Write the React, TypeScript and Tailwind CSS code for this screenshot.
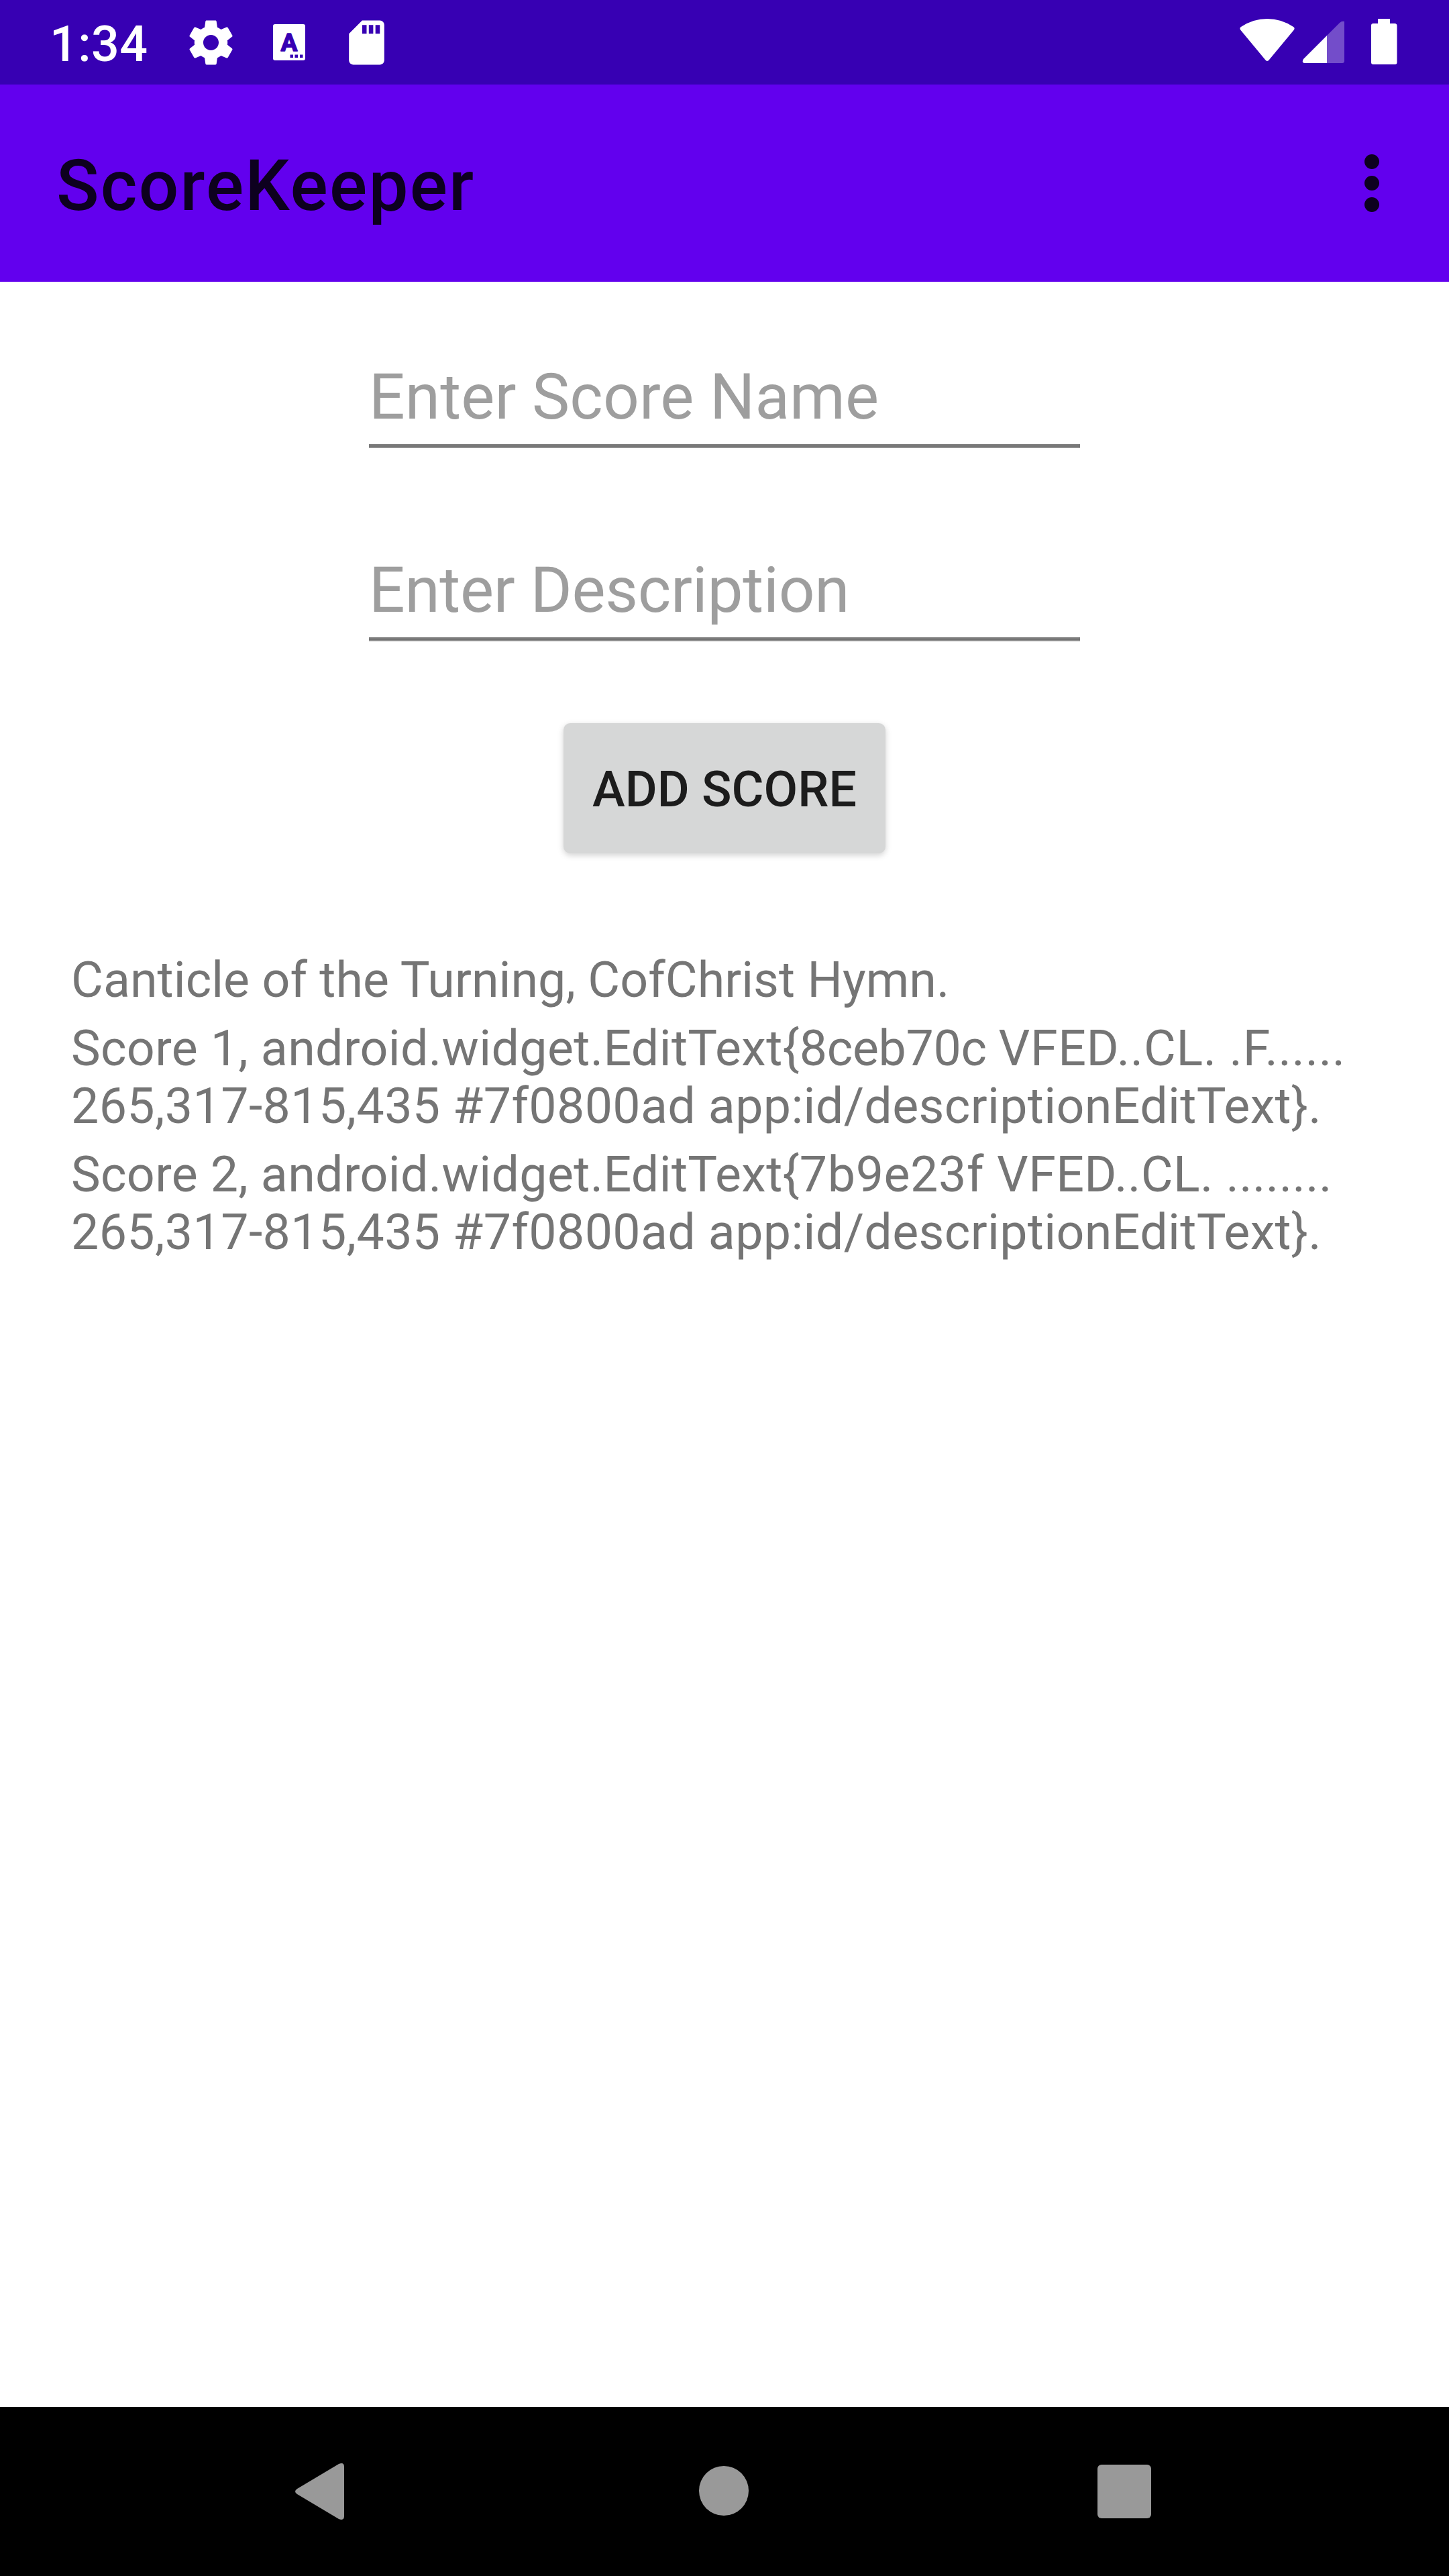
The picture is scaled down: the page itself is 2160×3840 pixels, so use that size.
import React from "react";

type Run = { text: string; tracking: string };

const entries: Run[][][] = [
  [[{ text: "Canticle of the Turning, CofChrist Hymn.", tracking: "tracking-[0.06px]" }]],
  [
    [
      { text: "Score 1, android.widget.EditText{", tracking: "tracking-[0.37px]" },
      { text: "8ceb70c ", tracking: "tracking-[-0.35px]" },
      { text: "VFED..CL. .F......", tracking: "tracking-[0.66px]" },
    ],
    [{ text: "265,317-815,435 #7f0800ad app:id/descriptionEditText}.", tracking: "tracking-[0.37px]" }],
  ],
  [
    [
      { text: "Score 2, android.widget.EditText{", tracking: "tracking-[0.37px]" },
      { text: "7b9e23f ", tracking: "tracking-[0.6px]" },
      { text: "VFED..CL. ........", tracking: "tracking-[0.4px]" },
    ],
    [{ text: "265,317-815,435 #7f0800ad app:id/descriptionEditText}.", tracking: "tracking-[0.37px]" }],
  ],
];

function StatusBar() {
  return (
    <div className="flex h-[126px] items-start justify-between bg-[#3700b3] text-white">
      <div className="flex items-start pl-[74px]">
        <span className="w-[201px] pt-[23px] text-[73.5px] font-medium leading-[86px] tracking-[0.4px]">1:34</span>
        <div className="flex gap-[37px] pt-[24px]">
          <svg className="size-[79px]" viewBox="0 0 24 24" fill="currentColor">
            <path d="M19.43 12.98c.04-.32.07-.64.07-.98s-.03-.66-.07-.98l2.11-1.65c.19-.15.24-.42.12-.64l-2-3.46c-.12-.22-.39-.3-.61-.22l-2.49 1c-.52-.4-1.08-.73-1.69-.98l-.38-2.65C14.46 2.18 14.25 2 14 2h-4c-.25 0-.46.18-.49.42l-.38 2.65c-.61.25-1.17.59-1.69.98l-2.49-1c-.23-.09-.49 0-.61.22l-2 3.46c-.13.22-.07.49.12.64l2.11 1.65c-.04.32-.07.65-.07.98s.03.66.07.98l-2.11 1.65c-.19.15-.24.42-.12.64l2 3.46c.12.22.39.3.61.22l2.49-1c.52.4 1.08.73 1.69.98l.38 2.65c.03.24.24.42.49.42h4c.25 0 .46-.18.49-.42l.38-2.65c.61-.25 1.17-.59 1.69-.98l2.49 1c.23.09.49 0 .61-.22l2-3.46c.12-.22.07-.49-.12-.64l-2.11-1.65zM12 15.5c-1.93 0-3.5-1.57-3.5-3.5s1.57-3.5 3.5-3.5 3.5 1.57 3.5 3.5-1.57 3.5-3.5 3.5z" />
          </svg>
          <div className="flex size-[79px] items-start justify-center pt-[12px]">
            <svg className="h-[54px] w-[48px]" viewBox="0 0 48 54">
              <rect width="48" height="54" rx="3" fill="white" />
              <text
                x="24"
                y="39.500"
                textAnchor="middle"
                className="fill-[#3700b3] stroke-[#3700b3] text-[37px] font-bold"
                strokeWidth="1.500"
                strokeLinejoin="round"
              >
                A
              </text>
              <path d="M25.500 45.500h4.500v4.500h-4.500zM32.500 45.500h4.500v4.500h-4.500zM40 45.500h4.500v4.500h-4.500z" fill="#3700b3" />
            </svg>
          </div>
          <svg className="size-[79px]" viewBox="0 0 24 24" fill="currentColor">
            <path d="M18 2h-8L4.020 8 4 20c0 1.100.9 2 2 2h12c1.100 0 2-.9 2-2V4c0-1.100-.9-2-2-2zm-6 6h-2V4h2v4zm3 0h-2V4h2v4zm3 0h-2V4h2v4z" />
          </svg>
        </div>
      </div>
      <svg className="h-[126px] w-[330px]" viewBox="1830 0 330 126" fill="white">
        <path d="M1849.500 45Q1847 42 1850 40Q1868 28 1889 28Q1910 28 1928 40Q1931 42 1928.500 45L1892 89Q1889 93 1886 89Z" />
        <path d="M1978 53V94H1944Q1940 93 1943 88Z" />
        <path d="M1978 53L1997 34Q2000 31 2004 32V91Q2004 94 2001 94H1978Z" fillOpacity="0.3" />
        <path d="M2054 28h18v7h7q3.500 0 3.500 3.500V93q0 3-3 3H2047q-3 0-3-3V38q0-3 3-3h7z" />
      </svg>
    </div>
  );
}

function AppBar() {
  return (
    <header className="flex h-[294px] items-center justify-between bg-[#6200ee] pl-[84px] pr-[104px] text-black/87">
      <h1 className="pt-[9px] text-[105px] font-medium leading-[124px] tracking-[2.2px]">ScoreKeeper</h1>
      <div className="flex flex-col gap-[10px]">
        <span className="size-[22px] rounded-full bg-black/87" />
        <span className="size-[22px] rounded-full bg-black/87" />
        <span className="size-[22px] rounded-full bg-black/87" />
      </div>
    </header>
  );
}

function Field({ hint, tracking }: { hint: string; tracking: string }) {
  return (
    <div className="flex h-[288px] w-[1060px] flex-col">
      <span className={`text-[94.5px] leading-[112px] text-[#9e9e9e] ${tracking}`}>{hint}</span>
      <div className="mt-[14px] h-[6px] border-y-2 border-t-[#7f7f7f] border-b-[#909090] bg-[#757575]" />
    </div>
  );
}

function NavBar() {
  return (
    <nav className="flex h-[252px] items-center bg-black pl-[440px] text-[#999999]">
      <svg className="h-[84px] w-[73px]" viewBox="0 0 73 84" fill="currentColor">
        <path d="M3 38L65 1Q73 -2 73 5V79Q73 86 65 83L3 46Q-3 42 3 38Z" />
      </svg>
      <div className="ml-[529px] mt-[-2px] size-[74px] rounded-full bg-[#999999]" />
      <div className="ml-[520px] size-[80px] rounded-[6px] bg-[#999999]" />
    </nav>
  );
}

export default function App() {
  return (
    <div className="flex h-[3840px] w-[2160px] flex-col bg-white font-['Roboto',sans-serif]">
      <StatusBar />
      <AppBar />
      <main className="flex flex-1 flex-col items-center pt-[116px]">
        <Field hint="Enter Score Name" tracking="tracking-[0.12px]" />
        <Field hint="Enter Description" tracking="tracking-[-0.27px]" />
        <button className="mt-[-34px] h-[194px] w-[480px] rounded-[10px] bg-[#d6d7d7] pt-[3px] text-[73.5px] font-medium leading-[86px] text-[#1c1c1c] shadow-[0_3px_10px_rgba(0,0,0,0.18)]">
          ADD SCORE
        </button>
        <div className="mt-[146px] flex w-full flex-col gap-[16px] pl-[106px] text-[73.5px] leading-[86px] text-[#757575]">
          {entries.map((lines, i) => (
            <div key={i}>
              {lines.map((runs, j) => (
                <p key={j} className="whitespace-pre">
                  {runs.map((run) => (
                    <span key={run.text} className={run.tracking}>{run.text}</span>
                  ))}
                </p>
              ))}
            </div>
          ))}
        </div>
      </main>
      <NavBar />
    </div>
  );
}
